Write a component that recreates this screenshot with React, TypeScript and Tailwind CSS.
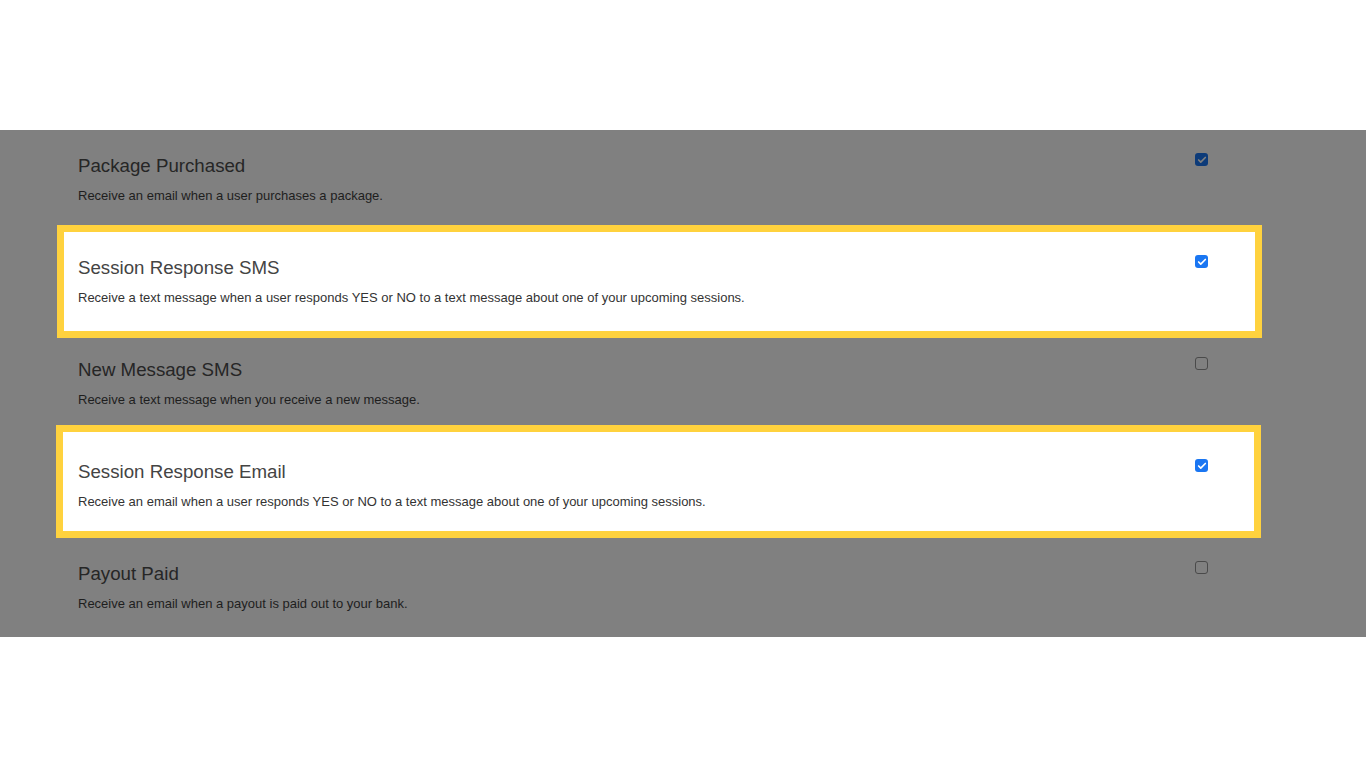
import { Check } from "lucide-react";

interface Setting {
  title: string;
  description: string;
  checked: boolean;
  frame?: string;
}

const settings: Setting[] = [
  {
    title: "Package Purchased",
    description: "Receive an email when a user purchases a package.",
    checked: true,
  },
  {
    title: "Session Response SMS",
    description:
      "Receive a text message when a user responds YES or NO to a text message about one of your upcoming sessions.",
    checked: true,
    frame: "left-[57px] top-[-7px] h-[113px]",
  },
  {
    title: "New Message SMS",
    description: "Receive a text message when you receive a new message.",
    checked: false,
  },
  {
    title: "Session Response Email",
    description:
      "Receive an email when a user responds YES or NO to a text message about one of your upcoming sessions.",
    checked: true,
    frame: "left-[56px] top-[-11px] h-[113px]",
  },
  {
    title: "Payout Paid",
    description: "Receive an email when a payout is paid out to your bank.",
    checked: false,
  },
];

function Box({ checked, lit }: { checked: boolean; lit: boolean }) {
  if (checked) {
    return (
      <span
        className={`flex h-[13px] w-[13px] items-center justify-center rounded-[3px] ${
          lit ? "bg-[#1a76f2]" : "bg-[#0d3b79]"
        }`}
      >
        <Check
          size={10}
          strokeWidth={4}
          className={lit ? "text-white" : "text-[#808080]"}
        />
      </span>
    );
  }
  return (
    <span
      className={`block h-[13px] w-[13px] rounded-[3px] border ${
        lit ? "border-[#767676] bg-white" : "border-[#4a4a4a] bg-[#808080]"
      }`}
    />
  );
}

function Row({ item }: { item: Setting }) {
  const lit = !!item.frame;
  return (
    <div className="relative h-[102px]">
      {lit && (
        <div
          className={`absolute w-[1205px] border-[7px] border-[#ffd23e] bg-white ${item.frame}`}
        />
      )}
      <div className="relative flex pl-[78px] pr-[158px]">
        <div className="flex-1 pt-[24px]">
          <h3
            className={`text-[18.7px] leading-6 ${
              lit ? "text-[#444]" : "text-[#262626]"
            }`}
          >
            {item.title}
          </h3>
          <p
            className={`mt-[8px] text-[13px] leading-5 ${
              lit ? "text-[#333]" : "text-[#1e1e1e]"
            }`}
          >
            {item.description}
          </p>
        </div>
        <div className="pt-[23px]">
          <Box checked={item.checked} lit={lit} />
        </div>
      </div>
    </div>
  );
}

export default function App() {
  return (
    <div
      className="min-h-[768px] bg-white pt-[130px]"
      style={{ fontFamily: '"Liberation Sans", Arial, sans-serif' }}
    >
      <div className="h-[507px] overflow-hidden bg-[#808080]">
        {settings.map((item) => (
          <Row key={item.title} item={item} />
        ))}
      </div>
    </div>
  );
}
